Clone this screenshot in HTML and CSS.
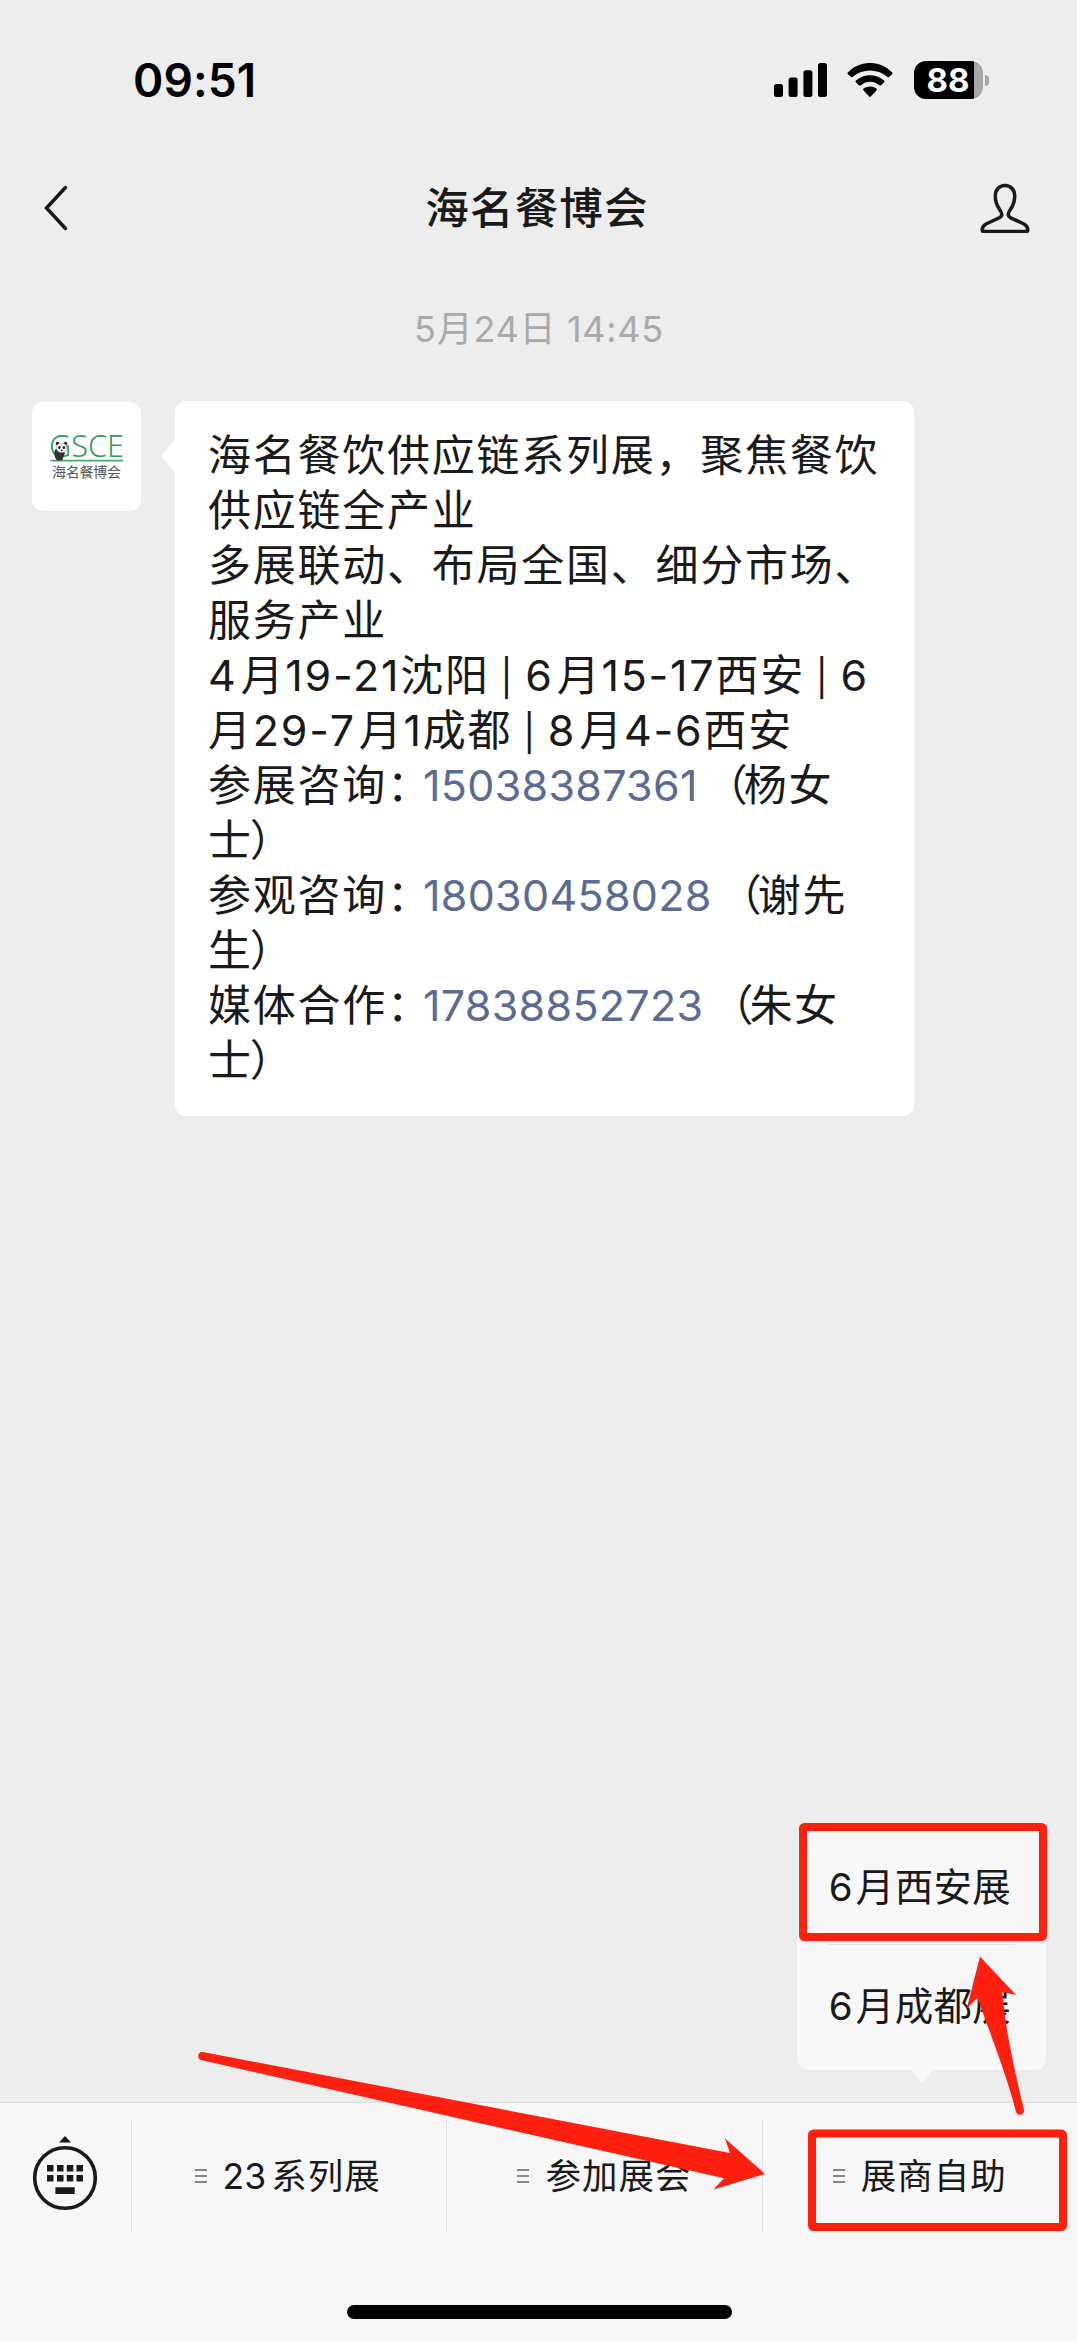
FILE: index.html
```html
<!DOCTYPE html>
<html lang="zh-CN">
<head>
  <meta charset="UTF-8" />
  <meta name="viewport" content="width=device-width, initial-scale=1" />
  <title>海名餐博会</title>
  <link rel="stylesheet" href="styles.css">
</head>
<body>
  <div class="phone">

    <div class="status-bar">
      <span class="time">09:51</span>
      <div class="status-icons">
        <svg class="signal" width="53" height="34" viewBox="0 0 53 34">
          <rect x="0" y="21" width="9" height="13" rx="2.5"/>
          <rect x="14.6" y="14.6" width="9" height="19.4" rx="2.5"/>
          <rect x="29.4" y="7.3" width="9" height="26.7" rx="2.5"/>
          <rect x="44" y="0" width="9" height="34" rx="2.5"/>
        </svg>
        <svg class="wifi" width="46" height="34" viewBox="0 0 46 34">
          <path d="M1 9.2 Q0 10.2 1 11.2 L3.8 13.8 Q4.8 14.6 5.8 13.8 C15.5 5.3 30.5 5.3 40.2 13.8 Q41.2 14.6 42.2 13.8 L45 11.2 Q46 10.2 45 9.2 C32.5 -3.1 13.5 -3.1 1 9.2Z"/>
          <path d="M9 17.6 Q8 18.6 9 19.6 L11.9 22.2 Q12.9 23 13.9 22.2 C19.2 17.7 26.8 17.7 32.1 22.2 Q33.1 23 34.1 22.2 L37 19.6 Q38 18.6 37 17.6 C29 10.4 17 10.4 9 17.6Z"/>
          <path d="M16.6 25.6 C20.3 22.7 25.7 22.7 29.4 25.6 Q30.3 26.5 29.4 27.4 L24 33.2 Q23 34.2 22 33.2 L16.6 27.4 Q15.7 26.5 16.6 25.6Z"/>
        </svg>
        <div class="battery">
          <div class="battery-body"><span>88</span></div>
          <div class="battery-nub"></div>
        </div>
      </div>
    </div>

    <div class="nav-bar">
      <svg class="back" width="28" height="48" viewBox="0 0 28 48">
        <path d="M23.5 3.5 L4.5 24 L23.5 44.5"/>
      </svg>
      <h1>海名餐博会</h1>
      <svg class="profile" width="50" height="50" viewBox="0 0 50 50">
        <path d="M25 2.5 C19 2.5 15.3 7 15.3 13 C15.3 19 16.5 22 19.3 26 C22 30 23 33 19.3 34.8 L6 41 C2.5 43 2.2 45 2.2 47 Q2.2 48.5 3.7 48.5 H46.3 Q47.8 48.5 47.8 47 C47.8 45 47.5 43 44 41 L30.7 34.8 C27 33 28 30 30.7 26 C33.5 22 34.7 19 34.7 13 C34.7 7 31 2.5 25 2.5Z"/>
      </svg>
    </div>

    <div class="chat">
      <div class="date">5月24日 14:45</div>

      <div class="message">
        <div class="avatar">
          <svg width="109" height="109" viewBox="0 0 109 109">
            <text class="logo-en" x="17" y="55" textLength="75" lengthAdjust="spacingAndGlyphs">GSCE</text>
            <path class="logo-line" d="M18.5 58.7 H91"/>
            <!-- panda -->
            <path d="M23.5 47 Q20.5 53 25 58.5 H30 L33 51 L27 47Z" fill="#333"/>
            <circle cx="25.5" cy="41.5" r="1.7" fill="#222"/>
            <circle cx="33.5" cy="41.5" r="1.7" fill="#222"/>
            <ellipse cx="29.5" cy="45.8" rx="5.3" ry="4.8" fill="#f3f3f3" stroke="#888" stroke-width=".5"/>
            <ellipse cx="27.3" cy="45.5" rx="1.2" ry="1.5" fill="#222"/>
            <ellipse cx="31.9" cy="45.5" rx="1.2" ry="1.5" fill="#222"/>
            <circle cx="29.7" cy="48.3" r=".9" fill="#222"/>
            <text class="logo-cn" x="20" y="75" textLength="69">海名餐博会</text>
          </svg>
        </div>
        <div class="bubble">
          <p>海名餐饮供应链系列展，聚焦餐饮</p>
          <p>供应链全产业</p>
          <p>多展联动、布局全国、细分市场、</p>
          <p>服务产业</p>
          <p>4<span class="month">月</span>19-21沈阳<span class="bar">|</span>6<span class="month">月</span>15-17西安<span class="bar">|</span>6</p>
          <p>月29-7<span class="month">月</span>1成都<span class="bar">|</span>8<span class="month">月</span>4-6西安</p>
          <p>参展咨询<span class="colon">：</span><a>15038387361</a><span class="open">（</span>杨女</p>
          <p>士<span class="close">）</span></p>
          <p>参观咨询<span class="colon">：</span><a>18030458028</a><span class="open">（</span>谢先</p>
          <p>生<span class="close">）</span></p>
          <p>媒体合作<span class="colon">：</span><a>17838852723</a><span class="open">（</span>朱女</p>
          <p>士<span class="close">）</span></p>
        </div>
      </div>
    </div>

    <div class="tab-bar">
      <div class="keyboard">
        <svg width="66" height="76" viewBox="0 0 66 76">
          <path d="M33 1 L39 7.5 H27Z"/>
          <circle cx="33" cy="43" r="30.3" fill="none" stroke="#1a1a1a" stroke-width="3.6"/>
          <path d="M15 30h6.5v6.5h-6.5z M25 30h6.5v6.5h-6.5z M34.8 30h6.5v6.5h-6.5z M44.5 30h6.5v6.5h-6.5z"/>
          <path d="M15 40h6.5v6.5h-6.5z M25 40h6.5v6.5h-6.5z M34.8 40h6.5v6.5h-6.5z M44.5 40h6.5v6.5h-6.5z"/>
          <path d="M23.4 52.3h19.3v6.7h-19.3z"/>
        </svg>
      </div>
      <div class="tab"><i class="lines"></i><span class="series"><b>23</b>系列展</span></div>
      <div class="tab"><i class="lines"></i><span>参加展会</span></div>
      <div class="tab"><i class="lines"></i><span>展商自助</span>
        <div class="popup">
          <div class="popup-item">6<span class="month">月</span>西安展</div>
          <div class="popup-item">6<span class="month">月</span>成都展</div>
        </div>
      </div>
    </div>

    <div class="home-indicator"></div>

    <!-- red marks drawn over the page -->
    <svg class="marks" width="1077" height="2341" viewBox="0 0 1077 2341">
      <rect x="803" y="1827" width="240" height="110" rx="1.5"/>
      <rect x="812" y="2133.5" width="251" height="93.5" rx="1.5"/>
      <path d="M203 2052 L730 2153 L725 2138.5 L765 2174 L713.5 2189.5 L724 2178.3 L201 2060 C196.5 2058.5 197.5 2051 203 2052Z"/>
      <path d="M980 1956.5 L1016 1995 L1002.3 1992 C1005 2025 1012 2060 1024 2110 C1024.5 2115.5 1018 2116.5 1016 2112 C1008 2080 995 2046 977.3 1997.7 L966.7 2008.7Z"/>
    </svg>
  </div>
</body>
</html>
```
FILE: styles.css
```css
* { box-sizing: border-box; }
body {
  margin: 0;
  font-family: Inter, "Noto Sans CJK SC", sans-serif;
  color: #1a1a1a; background: #ededed;
}
.phone {
  position: relative; width: 1077px; height: 2341px; overflow: hidden;
  display: flex; flex-direction: column; background: #ededed;
}

/* status bar */
.status-bar {
  height: 160px; padding: 0 88px 0 133px;
  display: flex; align-items: center; justify-content: space-between; color: #000;
}
.time { font-size: 46px; font-weight: 600; letter-spacing: 0.1px; }
.status-icons { display: flex; align-items: center; }
.wifi { margin-left: 20px; }
.battery { display: flex; align-items: center; gap: 2px; margin-left: 21px; }
.battery-body {
  width: 69px; height: 38px; border-radius: 12px; text-align: center;
  background: linear-gradient(to right, #000 60.5px, #a6a6a6 60.5px);
  color: #fff; font-size: 33px; font-weight: 700; line-height: 38px; padding-right: 1px;
}
.battery-nub { width: 4px; height: 11px; border-radius: 0 4px 4px 0; background: #a6a6a6; }

/* title */
.nav-bar {
  height: 96px; padding: 0 47px 0 42px;
  display: flex; align-items: center;
}
.nav-bar h1 {
  flex: 1; margin: 0; padding: 0 0 5px 24px; text-align: center;
  font-size: 43.5px; font-weight: 500; letter-spacing: 1.2px;
}
.nav-bar svg { fill: none; stroke: #1a1a1a; stroke-width: 3.5; stroke-linecap: round; }

/* chat */
.chat { flex: 1; }
.date {
  height: 145px; padding: 46px 0 0 1px; text-align: center;
  font-size: 36px; line-height: 54px; letter-spacing: 0.7px; color: #aaa;
}
.message { display: flex; align-items: flex-start; padding-left: 32px; }
.avatar {
  width: 109px; height: 109px; margin: 1px 34px 0 0;
  background: #fff; border-radius: 11px; overflow: hidden;
}
.avatar svg { display: block; }
.logo-en { font: 300 32px "Noto Sans", "Open Sans", sans-serif; fill: #2fa05a; }
.logo-line { stroke: #45ab6a; stroke-width: 1.8; }
.logo-cn { font-size: 14px; fill: #555; }
.bubble {
  position: relative; width: 739px; height: 715px; padding: 27px 0 0 33px;
  background: #fff; border-radius: 11px;
  font-size: 43px; line-height: 55px; letter-spacing: 1.75px; white-space: nowrap;
}
.bubble::before {
  content: ""; position: absolute; left: -14px; top: 39px;
  border: 16px solid transparent; border-left: 0; border-right: 14px solid #fff;
}
.bubble p { margin: 0; height: 55px; }
.bubble a { color: #5b6b93; letter-spacing: 0.3px; }
.colon { letter-spacing: -7px; }
.open { margin-left: 7px; letter-spacing: -4px; }
.close { margin-left: -3px; }
.month { margin-left: 3px; }
.bar { display: inline-block; width: 35.5px; text-align: center; font-size: 36px; }

/* bottom menu */
.tab-bar {
  height: 239px; padding-top: 16px;
  display: flex; background: #f7f7f7; border-top: 1px solid #dcdcdc;
}
.keyboard { width: 131px; height: 114px; padding: 16px 0 0 32px; }
.keyboard svg { display: block; fill: #1a1a1a; }
.tab {
  position: relative; flex: 1; height: 114px; border-left: 1px solid #e2e2e2;
  display: flex; align-items: center; justify-content: center; gap: 16px;
  font-size: 35.5px; letter-spacing: 1px; white-space: nowrap;
}
.tab > span { padding-bottom: 5px; }
.tab .series { padding-right: 3px; }
.tab b { font-weight: 400; margin-right: 5px; letter-spacing: 0; }
.lines {
  width: 12px; height: 14px;
  border-top: 2px solid #888; border-bottom: 2px solid #888;
  background: linear-gradient(#888, #888) center / 12px 2px no-repeat;
}
.popup {
  position: absolute; left: 34px; bottom: 163px; width: 249px; height: 244px;
  background: #f7f7f7; border-radius: 11px; box-shadow: 0 0 6px rgba(0, 0, 0, 0.03);
  font-size: 38.5px; letter-spacing: 0.3px;
}
.popup::after {
  content: ""; position: absolute; left: 114px; top: 244px;
  border: 11px solid transparent; border-bottom: 0; border-top: 13px solid #f7f7f7;
}
.popup-item { height: 118px; margin: 0 31px; padding: 2px 0 0 1px; line-height: 118px; }
.popup-item + .popup-item { border-top: 1px solid #e6e6e6; }

.home-indicator {
  position: absolute; left: 347px; bottom: 22px;
  width: 385px; height: 14px; border-radius: 7px; background: #000;
}
.marks { position: absolute; left: 0; top: 0; fill: #ff2010; }
.marks rect { fill: none; stroke: #ff2010; stroke-width: 8; }
```
